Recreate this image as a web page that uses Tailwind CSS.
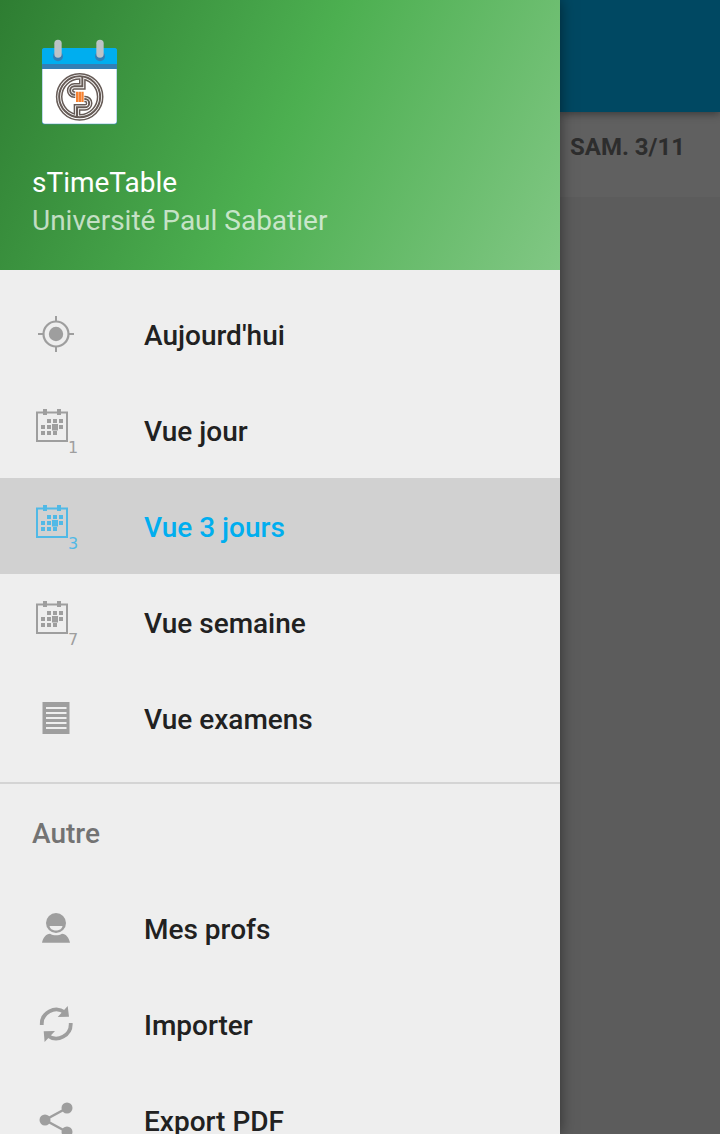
<!DOCTYPE html>
<html lang="fr">
<head>
<meta charset="utf-8">
<meta name="viewport" content="width=device-width, initial-scale=1">
<title>sTimeTable</title>
<script src="https://cdn.jsdelivr.net/npm/@tailwindcss/browser@4"></script>
</head>
<body class="font-['Roboto',sans-serif]">
<svg class="hidden" aria-hidden="true">
  <symbol id="calendar" viewBox="0 0 48 48">
    <path d="M5 6.5H35V35H5Z" fill="none" stroke="currentColor" stroke-width="2"/>
    <path fill="currentColor" d="M11 3h4v6h-4zM25 3h4v6h-4zM15 13h4v4h-4zM21 13h4v4h-4zM27 13h4v4h-4zM9 19h4v4H9zM15 19h4v4h-4zM20 18h6v6.500h-6zM27 19h4v4h-4zM9 25h4v4H9zM15 25h4v4h-4zM21 25h4v4h-4z"/>
  </symbol>
</svg>
<div class="flex h-screen overflow-hidden bg-[#5c5c5c]">
  <nav class="relative z-10 w-[560px] shrink-0 overflow-y-auto bg-[#eeeeee] shadow-[0_0_14px_rgba(0,0,0,0.5)] [scrollbar-width:none]" aria-label="Menu principal">
    <header class="h-[270px] bg-[linear-gradient(116deg,#2e7d32,#4caf50_50%,#81c784)] px-8 pt-8 text-[28px] leading-[38px] text-white">
      <svg class="size-24" viewBox="6 6 288 288" aria-hidden="true">
        <rect x="36" y="54" width="225" height="229" rx="8" fill="#3f8fc4"/>
        <path d="M37 117H260V273a8 8 0 0 1-8 8H45a8 8 0 0 1-8-8Z" fill="#fff"/>
        <path d="M36 102V62a8 8 0 0 1 8-8H253a8 8 0 0 1 8 8V102Z" fill="#00aeef"/>
        <path d="M36 102H261V117H36Z" fill="#337fb5"/>
        <circle cx="84" cy="79" r="15" fill="#337fb5"/>
        <circle cx="210" cy="79" r="15" fill="#337fb5"/>
        <rect x="73" y="29" width="22" height="54" rx="11" fill="#bdc3c7"/>
        <rect x="199" y="29" width="22" height="54" rx="11" fill="#bdc3c7"/>
        <g fill="none" stroke="#665b56">
          <g stroke-width="20"><circle cx="149" cy="200.500" r="61.500"/><path d="M157 138V169H133a12.500 12.500 0 0 0 0 25H137"/><path d="M141 263V232H165a12.500 12.500 0 0 0 0-25H161"/></g>
          <g stroke="#fff" stroke-width="11"><circle cx="149" cy="200.500" r="61.500"/><path d="M157 138V169H133a12.500 12.500 0 0 0 0 25H137"/><path d="M141 263V232H165a12.500 12.500 0 0 0 0-25H161"/></g>
          <g stroke-width="6"><circle cx="149" cy="200.500" r="61.500"/><path d="M157 138V169H133a12.500 12.500 0 0 0 0 25H137"/><path d="M141 263V232H165a12.500 12.500 0 0 0 0-25H161"/></g>
        </g>
        <path d="M136 183H163V218H136Z" fill="#fff"/>
        <path d="M138 185h7v31h-7zM146 185h7v31h-7zM154 185h7v31h-7z" fill="#f58232"/>
      </svg>
      <h1 class="mt-9">sTimeTable</h1>
      <p class="text-white/70">Université Paul Sabatier</p>
    </header>
    <ul class="py-4 text-[28px] font-medium text-[#212121]">
      <li><a href="#aujourdhui" class="flex h-24 items-center gap-16 px-8">
        <svg class="size-12 shrink-0 text-[#9e9e9e]" viewBox="0 0 48 48" aria-hidden="true"><circle cx="24" cy="24" r="7.200" fill="currentColor"/><circle cx="24" cy="24" r="12.500" fill="none" stroke="currentColor" stroke-width="2.200"/><path d="M24 6v5M24 37v5M6 24h5M37 24h5" stroke="currentColor" stroke-width="2"/></svg>
        <span class="pt-1">Aujourd'hui</span></a></li>
      <li><a href="#jour" class="flex h-24 items-center gap-16 px-8">
        <svg class="size-12 shrink-0 overflow-visible text-[#9e9e9e]" viewBox="0 0 48 48" aria-hidden="true"><use href="#calendar"/><text x="36" y="47" font-size="16" font-family="DejaVu Sans" fill="currentColor">1</text></svg>
        <span class="pt-1">Vue jour</span></a></li>
      <li><a href="#3jours" aria-current="page" class="flex h-24 items-center gap-16 bg-[#d1d1d1] px-8 text-[#00aeef]">
        <svg class="size-12 shrink-0 overflow-visible text-[#50b9e6]" viewBox="0 0 48 48" aria-hidden="true"><use href="#calendar"/><text x="36" y="47" font-size="16" font-family="DejaVu Sans" fill="currentColor">3</text></svg>
        <span class="pt-1">Vue 3 jours</span></a></li>
      <li><a href="#semaine" class="flex h-24 items-center gap-16 px-8">
        <svg class="size-12 shrink-0 overflow-visible text-[#9e9e9e]" viewBox="0 0 48 48" aria-hidden="true"><use href="#calendar"/><text x="36" y="47" font-size="16" font-family="DejaVu Sans" fill="currentColor">7</text></svg>
        <span class="pt-1">Vue semaine</span></a></li>
      <li><a href="#examens" class="flex h-24 items-center gap-16 px-8">
        <svg class="size-12 shrink-0 text-[#9e9e9e]" viewBox="0 0 48 48" aria-hidden="true"><path d="M10.500 8H37.500V40H10.500Z" fill="currentColor"/><path d="M14 14H34.500M14 19H34.500M14 24H34.500M14 29H34.500M14 34H34.500" stroke="#eeeeee" stroke-width="2"/></svg>
        <span class="pt-1">Vue examens</span></a></li>
    </ul>
    <section class="border-t-2 border-[#d4d4d4] text-[28px] font-medium text-[#212121]">
      <h2 class="flex h-24 items-center px-8 pt-1 text-[#737373]">Autre</h2>
      <ul>
        <li><a href="#profs" class="flex h-24 items-center gap-16 px-8">
          <svg class="size-12 shrink-0 text-[#9e9e9e]" viewBox="0 0 48 48" aria-hidden="true"><circle cx="24" cy="19" r="10" fill="currentColor"/><path d="M17.500 22H30.500C29.500 28 18.500 28 17.500 22Z" fill="#eeeeee"/><path d="M10 38.700C11 33.500 14 30 18 29.700C21.500 31.800 26.500 31.800 30 29.700C34 30 37 33.500 38 38.700Z" fill="currentColor"/></svg>
          <span class="pt-1">Mes profs</span></a></li>
        <li><a href="#importer" class="flex h-24 items-center gap-16 px-8">
          <svg class="size-12 shrink-0 text-[#9e9e9e]" viewBox="0 0 48 48" aria-hidden="true"><path d="M9.800 25A14.500 14.500 0 0 1 33 12.500M38.700 23A14.500 14.500 0 0 1 15.500 35.500" fill="none" stroke="currentColor" stroke-width="3.800"/><path d="M35.700 6L37 16.700L25.700 17ZM12.600 42L11.700 31.300L23 31Z" fill="currentColor"/></svg>
          <span class="pt-1">Importer</span></a></li>
        <li><a href="#pdf" class="flex h-24 items-center gap-16 px-8">
          <svg class="size-12 shrink-0 text-[#9e9e9e]" viewBox="0 0 48 48" aria-hidden="true"><path d="M35 12L13 24L35 36" fill="none" stroke="currentColor" stroke-width="2.500"/><g fill="currentColor"><circle cx="35" cy="12" r="5.500"/><circle cx="13" cy="24" r="5.500"/><circle cx="35" cy="36" r="5.500"/></g></svg>
          <span class="pt-1">Export PDF</span></a></li>
      </ul>
    </section>
  </nav>
  <main class="min-w-0 flex-1">
    <div class="relative h-28 bg-[#004862] shadow-[0_2px_8px_rgba(0,0,0,0.4)]"></div>
    <div class="h-[85px] bg-[#606060] px-[10px] pt-[19px] text-2xl font-bold whitespace-nowrap text-[#2d2d2d]">SAM. 3/11</div>
  </main>
</div>
</body>
</html>
